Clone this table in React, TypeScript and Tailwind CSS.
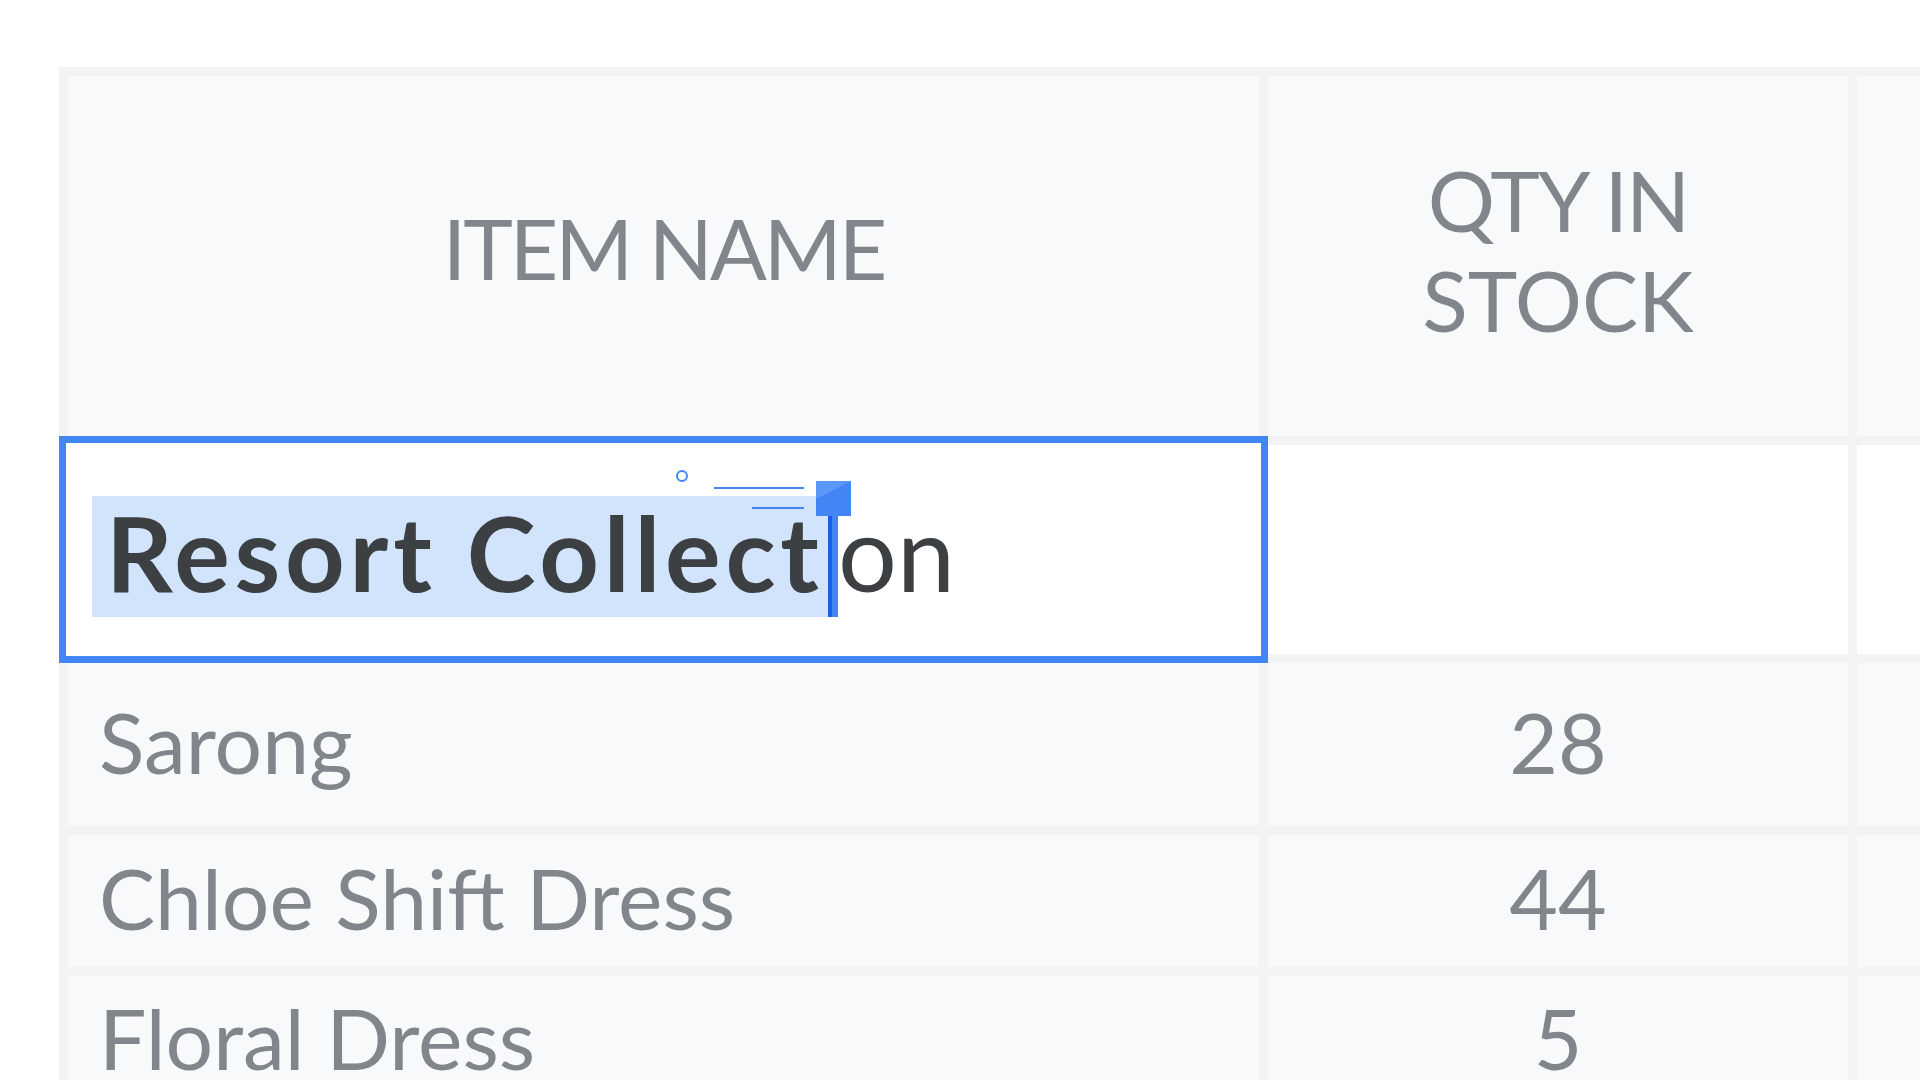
import React from 'react';

const rows = [
  { name: 'Sarong', qty: '28', h: 'h-[163px]' },
  { name: 'Chloe Shift Dress', qty: '44', h: 'h-[132px]' },
  { name: 'Floral Dress', qty: '5', h: 'h-[130px]' },
];

const font = { fontFamily: 'Lato, "Open Sans", sans-serif' };

const App = () => {
  return (
    <div className="w-[1920px] h-[1080px] bg-white overflow-hidden pt-[67px] pl-[59px]" style={font}>
      <div className="w-[1900px] bg-[#f1f3f4] p-[9px]">
        <div className="grid grid-cols-[1191px_580px_600px] gap-[9px]">
          {/* header */}
          <div className="h-[360px] bg-[#f8f9fa] flex items-center justify-center text-[84px] text-[#80868b] leading-[100px] tracking-[-3px] pb-[16px]">
            ITEM NAME
          </div>
          <div className="h-[360px] bg-[#f8f9fa] flex items-center justify-center text-center text-[84px] text-[#80868b] leading-[100px] pb-[12px]">
            <span>
              <span className="tracking-[-2px]">QTY IN</span>
              <br />
              STOCK
            </span>
          </div>
          <div className="h-[360px] bg-[#f8f9fa]" />

          {/* row being edited */}
          <div className="h-[209px] bg-white relative">
            <div className="absolute -inset-[9px] border-[7px] border-[#4285f4] bg-white" />
            <div className="relative flex items-start pt-[51px] pl-[24px] text-[104px] leading-[121px] text-[#3c4043]">
              <span className="bg-[#d2e3fc] pl-[14px] font-bold h-[121px] w-[738px] whitespace-nowrap tracking-[4.8px]">
                <span className="relative -top-[5px]">Resort Collect</span>
              </span>
              <span className="relative w-[10px] h-[121px] -ml-[2px]">
                <span className="absolute left-0 top-[20px] bottom-0 w-[10px] bg-[#4285f4]" />
                <span className="absolute left-0 top-[20px] bottom-0 w-[4px] bg-[#1a5ee6]" />
                <span className="absolute -left-[12px] -top-[15px] w-[35px] h-[35px] bg-[#4285f4] overflow-hidden">
                  <svg width="35" height="35" className="absolute left-0 top-0">
                    <polygon points="0,0 35,0 0,18" fill="#5b97f6" />
                  </svg>
                </span>
              </span>
              <span className="relative -top-[5px] whitespace-nowrap">on</span>
            </div>
            <svg className="absolute left-0 top-0" width="760" height="80">
              <circle cx="614" cy="31" r="5" fill="none" stroke="#4285f4" strokeWidth="2" />
              <line x1="646" y1="43" x2="736" y2="43" stroke="#4285f4" strokeWidth="2" />
              <line x1="684" y1="63" x2="736" y2="63" stroke="#4285f4" strokeWidth="2" />
            </svg>
          </div>
          <div className="h-[209px] bg-white" />
          <div className="h-[209px] bg-white" />

          {rows.map((r) => (
            <React.Fragment key={r.name}>
              <div className={`${r.h} bg-[#f8f9fa] flex items-center pl-[31px] pb-[6px] text-[84px] text-[#80868b] leading-[100px] whitespace-nowrap`}>
                {r.name}
              </div>
              <div className={`${r.h} bg-[#f8f9fa] flex items-center justify-center pb-[6px] text-[84px] text-[#80868b] leading-[100px]`}>
                {r.qty}
              </div>
              <div className={`${r.h} bg-[#f8f9fa]`} />
            </React.Fragment>
          ))}
        </div>
      </div>
    </div>
  );
};

export default App;
